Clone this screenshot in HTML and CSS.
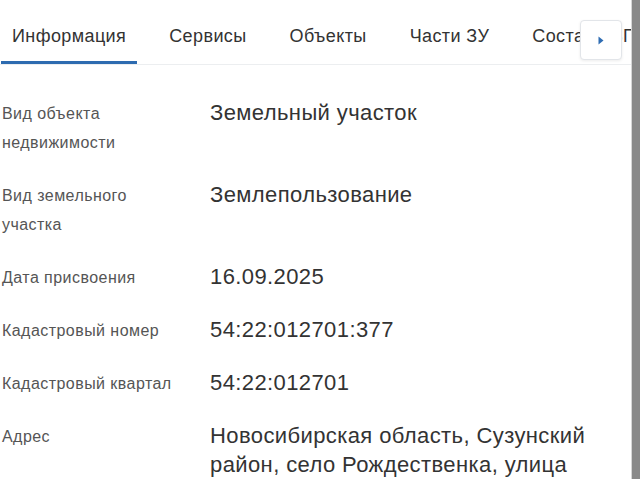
FILE: index.html
```html
<!DOCTYPE html>
<html lang="ru">
<head>
  <meta charset="UTF-8">
  <meta name="viewport" content="width=device-width, initial-scale=1.0">
  <title>Информация об объекте</title>
  <link rel="stylesheet" href="styles.css">
</head>
<body>
  <div class="content">
    <div class="tabs-bar">
      <div class="tabs">
        <div class="tab active">Информация</div>
        <div class="tab">Сервисы</div>
        <div class="tab">Объекты</div>
        <div class="tab">Части ЗУ</div>
        <div class="tab">Состав ЕЗП</div>
      </div>
      <button class="tabs-next" aria-label="Дальше">
        <svg width="6" height="9" viewBox="0 0 6 9"><path d="M0.5 0.5 L5.5 4.5 L0.5 8.5 Z" fill="#2f6db3"/></svg>
      </button>
    </div>

    <div class="info">
      <div class="row">
        <div class="label">Вид объекта<br>недвижимости</div>
        <div class="value">Земельный участок</div>
      </div>
      <div class="row">
        <div class="label">Вид земельного<br>участка</div>
        <div class="value">Землепользование</div>
      </div>
      <div class="row">
        <div class="label">Дата присвоения</div>
        <div class="value">16.09.2025</div>
      </div>
      <div class="row">
        <div class="label">Кадастровый номер</div>
        <div class="value">54:22:012701:377</div>
      </div>
      <div class="row">
        <div class="label">Кадастровый квартал</div>
        <div class="value">54:22:012701</div>
      </div>
      <div class="row">
        <div class="label">Адрес</div>
        <div class="value">Новосибирская область, Сузунский район, село Рождественка, улица Центральная</div>
      </div>
    </div>
  </div>
  <div class="edge-bar"></div>
</body>
</html>
```

FILE: styles.css
```css
html, body {
  margin: 0;
  height: 100%;
}
body {
  background: #fff;
  font-family: "Liberation Sans", Arial, sans-serif;
  color: #333;
  overflow: hidden;
}
.content {
  width: 631px;
  height: 479px;
  overflow: hidden;
}
.edge-bar {
  position: fixed;
  top: 0;
  right: 0;
  bottom: 0;
  width: 8px;
  background: #898989;
  border-left: 1px solid #d6d6d6;
  z-index: 10;
}
.tabs-bar {
  position: relative;
  height: 64px;
  border-bottom: 1px solid #eceef0;
  overflow: hidden;
}
.tabs {
  display: flex;
  gap: 21px;
  padding-left: 1px;
  white-space: nowrap;
}
.tab {
  padding: 0 11px;
  height: 61px;
  line-height: 73px;
  font-size: 18px;
  letter-spacing: 0.4px;
  color: #333;
  border-bottom: 3px solid transparent;
}
.tab.active {
  border-bottom-color: #2d6bb0;
}
.tabs-next {
  position: absolute;
  left: 580px;
  top: 20px;
  width: 42px;
  height: 40px;
  padding: 0;
  background: #fff;
  border: 1px solid #e2e5e9;
  border-radius: 4px;
  box-shadow: 0 1px 3px rgba(0, 0, 0, 0.08);
  display: flex;
  align-items: center;
  justify-content: center;
  cursor: pointer;
}
.info {
  padding: 33px 0 0 2px;
}
.row {
  display: grid;
  grid-template-columns: 208px 1fr;
  margin-bottom: 23px;
}
.label {
  font-size: 16px;
  letter-spacing: 0.45px;
  line-height: 29px;
  color: #555;
  padding-top: 1px;
}
.value {
  font-size: 22px;
  letter-spacing: 0.4px;
  line-height: 29px;
  color: #333;
  padding-right: 20px;
}
```
